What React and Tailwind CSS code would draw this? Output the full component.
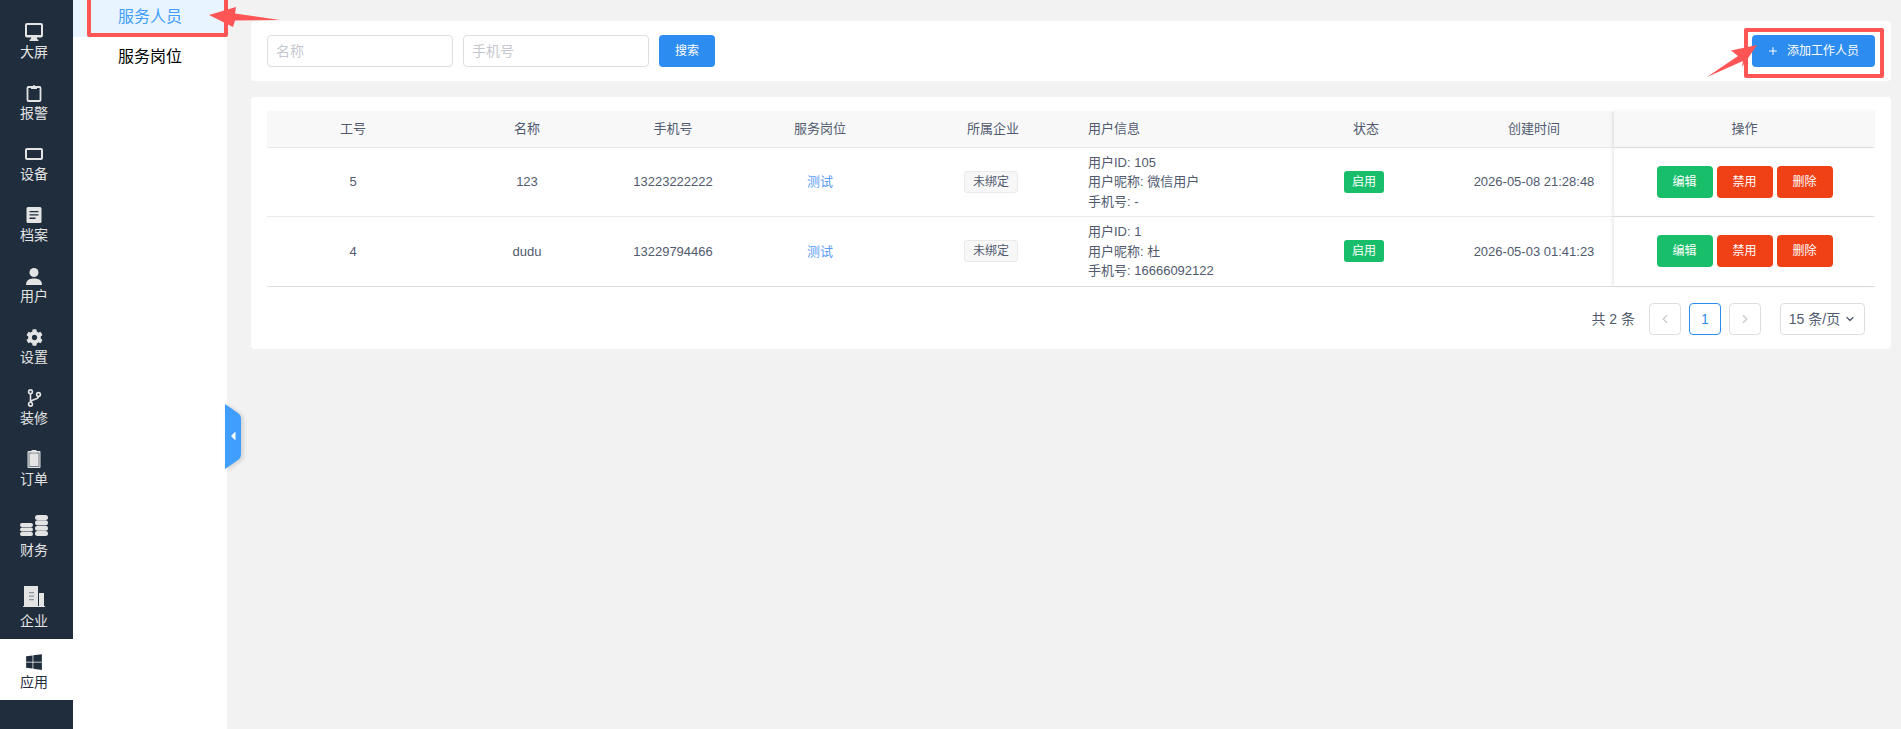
import React from 'react';
import { ChevronDown, ChevronLeft, ChevronRight, Plus } from 'lucide-react';
import { FaCog, FaWindows } from 'react-icons/fa';

const DARK = '#1f2d3d';

const Desktop = () => (
  <svg width="18" height="18" viewBox="0 0 18 18" fill="none">
    <rect x="1" y="1" width="16" height="12.5" rx="1" stroke="currentColor" strokeWidth="2" />
    <path d="M1 12h16v2H1zM6.5 14h5l1 2.5h1V18H4.500v-1.500h1z" fill="currentColor" />
  </svg>
);

const Clipboard = () => (
  <svg width="18" height="18" viewBox="0 0 18 18" fill="none">
    <rect x="2.500" y="3" width="13" height="14" rx="1" stroke="currentColor" strokeWidth="1.800" />
    <path d="M6 2h2a1 1 0 0 1 2 0h2v3H6z" fill="currentColor" />
  </svg>
);

const Tablet = () => (
  <svg width="18" height="18" viewBox="0 0 18 18" fill="none">
    <rect x="1" y="4" width="16" height="10" rx="1" stroke="currentColor" strokeWidth="2" />
  </svg>
);

const FileText = () => (
  <svg width="18" height="18" viewBox="0 0 18 18">
    <rect x="1.500" y="1" width="15" height="16" rx="1.500" fill="currentColor" />
    <path d="M4.500 5h9v1.300h-9zM4.500 8.300h9v1.300h-9zM4.500 11.600h6v1.300h-6z" fill={DARK} />
  </svg>
);

const User = () => (
  <svg width="18" height="18" viewBox="0 0 18 18">
    <circle cx="9" cy="5.500" r="4.500" fill="currentColor" />
    <path d="M1 18c0-4.500 3-6.500 8-6.500s8 2 8 6.500z" fill="currentColor" />
  </svg>
);

const Branch = () => (
  <svg width="18" height="18" viewBox="0 0 18 18" fill="none" stroke="currentColor" strokeWidth="1.600">
    <circle cx="5.500" cy="2.800" r="1.900" />
    <circle cx="5.500" cy="15.200" r="1.900" />
    <circle cx="13.500" cy="5.500" r="1.900" />
    <path d="M5.500 4.700v8.600M13.500 7.400c0 3.500-8 2.600-8 5.900" />
  </svg>
);

const Order = () => (
  <svg width="18" height="18" viewBox="0 0 18 18">
    <rect x="2.500" y="1" width="13" height="17" rx="1" fill="currentColor" />
    <rect x="4" y="3" width="10" height="13.500" fill="none" stroke={DARK} strokeWidth="0.800" opacity="0.7" />
    <rect x="6.500" y="0" width="5" height="2.500" fill="currentColor" />
  </svg>
);

const Coins = () => (
  <svg width="28" height="21" viewBox="0 0 28 21" fill="currentColor">
    <rect x="0" y="8" width="13" height="4" rx="2" />
    <rect x="0" y="12.500" width="13" height="4" rx="2" />
    <rect x="0" y="17" width="13" height="4" rx="2" />
    <rect x="15" y="0" width="13" height="5" rx="2.500" />
    <rect x="15" y="5.300" width="13" height="5" rx="2.500" />
    <rect x="15" y="10.700" width="13" height="5" rx="2.500" />
    <rect x="15" y="16" width="13" height="5" rx="2.500" />
  </svg>
);

const Building = () => (
  <svg width="22" height="21" viewBox="0 0 22 21">
    <path d="M1 0h14v20H1zM16 7h5v13h-5zM0 20h22v1H0z" fill="currentColor" />
    <path d="M6 6h5v1.300H6zM6 9.500h5v1.300H6zM6 13h5v1.300H6z" fill="#8a93a0" />
  </svg>
);

const navItems = [
  { label: '大屏', icon: <Desktop /> },
  { label: '报警', icon: <Clipboard /> },
  { label: '设备', icon: <Tablet /> },
  { label: '档案', icon: <FileText /> },
  { label: '用户', icon: <User /> },
  { label: '设置', icon: <FaCog size={17} /> },
  { label: '装修', icon: <Branch /> },
  { label: '订单', icon: <Order /> },
  { label: '财务', icon: <Coins />, tall: true },
  { label: '企业', icon: <Building />, tall: true },
  { label: '应用', icon: <FaWindows size={18} />, active: true },
];

const rows = [
  { id: '5', name: '123', phone: '13223222222', uid: '105', nick: '微信用户', mobile: '-', time: '2026-05-08 21:28:48' },
  { id: '4', name: 'dudu', phone: '13229794466', uid: '1', nick: '杜', mobile: '16666092122', time: '2026-05-03 01:41:23' },
];

const cols = 'grid grid-cols-[172px_176px_116px_178px_168px_201px_176px_160px_261px]';
const cell = 'flex items-center justify-center';
const fixedCell = 'shadow-[-2px_0_3px_rgba(0,0,0,0.08)]';

function Sidebar() {
  return (
    <aside className="w-[73px] shrink-0 bg-[#1f2d3d] pt-[9px]">
      {navItems.map((item) => (
        <div
          key={item.label}
          className={`flex flex-col items-center pr-[5px] pt-[14px] ${item.tall ? 'h-[71px]' : 'h-[61px]'} ${item.active ? 'bg-white text-[#1f2d3d]' : 'text-[#e4e4e4]'}`}
        >
          <div className={`flex items-center justify-center ${item.tall ? 'h-[28px]' : 'h-[18px]'}`}>{item.icon}</div>
          <div className="text-[14px] leading-[22px]">{item.label}</div>
        </div>
      ))}
    </aside>
  );
}

function SubMenu() {
  return (
    <div className="relative w-[154px] shrink-0 bg-white">
      <div className="-mt-[3px] flex h-[40px] items-center justify-center bg-[#e8f4ff] text-[16px] text-[#409eff]">服务人员</div>
      <div className="flex h-[40px] items-center justify-center text-[16px] text-black">服务岗位</div>
      {/* collapse handle */}
      <svg className="absolute left-[152px] top-[404px] drop-shadow-[2px_1px_2px_rgba(0,0,0,0.15)]" width="16" height="65" viewBox="0 0 16 65">
        <path d="M0 0 L13 9 Q16 11 16 15 V50 Q16 54 13 56 L0 65 Z" fill="#409eff" />
        <path d="M10.500 27.500 V36.500 L6 32 Z" fill="#fff" />
      </svg>
    </div>
  );
}

function TableBlock() {
  return (
    <div className="text-[13px] text-[#515a6e]">
      <div className={`${cols} h-[36.5px] border-b border-[#e8eaec] bg-[#f8f8f9]`}>
        {['工号', '名称', '手机号', '服务岗位', '所属企业'].map((h) => (
          <div key={h} className={cell}>{h}</div>
        ))}
        <div className="flex items-center pl-[11px]">用户信息</div>
        <div className={cell}>状态</div>
        <div className={cell}>创建时间</div>
        <div className={`${cell} ${fixedCell}`}>操作</div>
      </div>
      {rows.map((r, i) => (
        <div key={r.id} className={`${cols} border-b ${i === rows.length - 1 ? 'border-[#dcdee2]' : 'border-[#e8eaec]'}`}>
          <div className={cell}>{r.id}</div>
          <div className={cell}>{r.name}</div>
          <div className={cell}>{r.phone}</div>
          <div className={`${cell} text-[#5c9dfa]`}>测试</div>
          <div className={cell}>
            <span className="mr-[4px] flex h-[22px] w-[54px] items-center justify-center rounded-[3px] border border-[#e8eaec] bg-[#f7f7f7] text-[12px]">未绑定</span>
          </div>
          <div className="py-[5px] pl-[11px] leading-[19.5px]">
            <div>用户ID: {r.uid}</div>
            <div>用户昵称: {r.nick}</div>
            <div>手机号: {r.mobile}</div>
          </div>
          <div className={cell}>
            <span className="mr-[4px] flex h-[22px] w-[40px] items-center justify-center rounded-[3px] bg-[#19be6b] text-[12px] text-white">启用</span>
          </div>
          <div className={cell}>{r.time}</div>
          <div className={`${cell} gap-[4px] ${fixedCell}`}>
            <button className="h-[32px] w-[56px] rounded-[4px] bg-[#19be6b] text-[12px] text-white">编辑</button>
            <button className="h-[32px] w-[56px] rounded-[4px] bg-[#f04116] text-[12px] text-white">禁用</button>
            <button className="h-[32px] w-[56px] rounded-[4px] bg-[#f04116] text-[12px] text-white">删除</button>
          </div>
        </div>
      ))}
    </div>
  );
}

function Pagination() {
  const box = 'flex h-[32px] w-[32px] items-center justify-center rounded-[4px] border bg-white';
  return (
    <div className="mt-[16.5px] flex items-center justify-end pr-[10px] text-[14px] text-[#515a6e]">
      <span className="mr-[14px]">共 2 条</span>
      <div className={`${box} border-[#dcdee2] text-[#c5c8ce]`}><ChevronLeft size={14} /></div>
      <div className={`${box} ml-[8px] border-[#2d8cf0] text-[#2d8cf0]`}>1</div>
      <div className={`${box} ml-[8px] border-[#dcdee2] text-[#c5c8ce]`}><ChevronRight size={14} /></div>
      <div className="ml-[19px] flex h-[32px] w-[85px] items-center justify-center gap-[4px] rounded-[4px] border border-[#dcdee2]">
        15 条/页
        <ChevronDown size={12} strokeWidth={2.5} className="text-[#515a6e]" />
      </div>
    </div>
  );
}

function Annotations() {
  return (
    <>
      <div className="absolute left-[87px] top-[-4px] h-[41px] w-[141px] rounded-[2px] border-4 border-[#ff5555]" />
      <div className="absolute left-[1744px] top-[28px] h-[50px] w-[140px] rounded-[2px] border-4 border-[#ff5555]" />
      <svg className="absolute left-0 top-0" width="1901" height="100" viewBox="0 0 1901 100">
        <path d="M209 15 L236 7 L235 13.500 L280 20 L235 20.500 L233 27 Z" fill="#ff5555" />
        <path d="M1757 45 L1731 50.500 L1738 56 L1707 77 L1743 61 L1742 67 Z" fill="#ff5555" />
      </svg>
    </>
  );
}

export default function App() {
  return (
    <div className="relative flex h-screen overflow-hidden bg-[#f2f2f2] font-['Liberation_Sans','Noto_Sans_CJK_SC',sans-serif]">
      <Sidebar />
      <SubMenu />
      <main className="flex-1 pl-[24px] pr-[10px] pt-[21px]">
        <div className="flex h-[60px] items-center justify-between rounded-[4px] bg-white px-[16px]">
          <div className="flex items-center">
            <input placeholder="名称" className="h-[32px] w-[186px] rounded-[4px] border border-[#dcdee2] px-[8px] text-[14px] outline-none placeholder:text-[#c5c8ce]" />
            <input placeholder="手机号" className="ml-[10px] h-[32px] w-[186px] rounded-[4px] border border-[#dcdee2] px-[8px] text-[14px] outline-none placeholder:text-[#c5c8ce]" />
            <button className="ml-[10px] h-[32px] w-[56px] rounded-[4px] bg-[#2d8cf0] text-[12px] text-white">搜索</button>
          </div>
          <button className="flex h-[32px] w-[123px] items-center justify-center gap-[8px] rounded-[4px] bg-[#2d8cf0] pr-[1px] text-[12px] text-white">
            <Plus size={12} />
            添加工作人员
          </button>
        </div>
        <div className="mt-[16px] h-[252px] rounded-[4px] bg-white px-[16px] pt-[14px]">
          <TableBlock />
          <Pagination />
        </div>
      </main>
      <Annotations />
    </div>
  );
}
